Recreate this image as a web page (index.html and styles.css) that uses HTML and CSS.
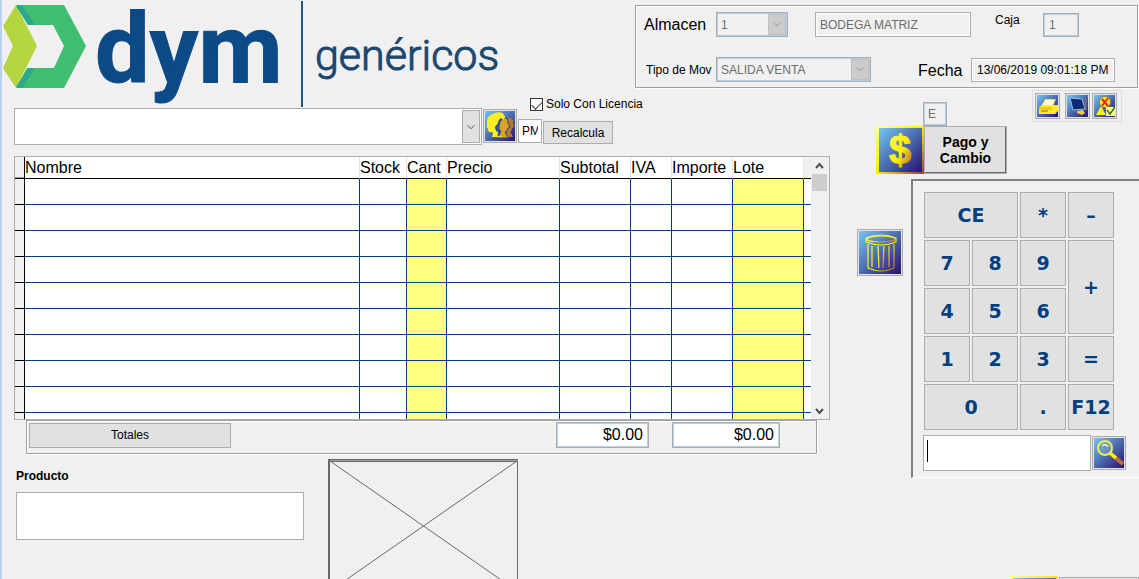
FILE: index.html
```html
<!DOCTYPE html>
<html lang="es">
<head>
<meta charset="utf-8">
<title>Punto de venta</title>
<link rel="stylesheet" href="styles.css">
</head>
<body>
<svg class="defs" width="0" height="0" aria-hidden="true">
  <defs>
    <linearGradient id="blue" x1="0" y1="0" x2="1" y2="1"><stop offset="0" stop-color="#74c6f2"/><stop offset=".5" stop-color="#4c6cb0"/><stop offset="1" stop-color="#281070"/></linearGradient>
    <linearGradient id="gold" x1="0" y1="0" x2="1" y2="1"><stop offset="0" stop-color="#fff870"/><stop offset=".55" stop-color="#ffee00"/><stop offset="1" stop-color="#a85838"/></linearGradient>
    <linearGradient id="frame" x1="0" y1="0" x2="1" y2="1"><stop offset="0" stop-color="#ffffa8"/><stop offset=".5" stop-color="#ffea00"/><stop offset="1" stop-color="#904040"/></linearGradient>
  </defs>
</svg>
<header class="header">
  <svg class="logo" width="508" height="107" viewBox="0 0 508 107" role="img" aria-label="dym genéricos">
    <path d="M14 5H62L84 46L62 88H14L25 68H52L62 46L51 25H26Z" fill="#3fbe72"/>
    <path d="M14 5L1 26L11 46L1 68L14 88L35 46Z" fill="#b4d440"/>
    <path d="M14 6L26 25L33 25L20 5ZM14 87L26 68H33L20 88Z" fill="#2ca88c"/>
    <text class="logo-name" x="93" y="82">dym</text>
    <path d="M300 1V107" stroke="#24557f" stroke-width="2"/>
    <text class="logo-sub" x="313" y="70">genéricos</text>
  </svg>
  <section class="info">
    <div class="info-row">
      <label class="info-label big" for="almacen">Almacen</label>
      <div class="combo off short">
        <select id="almacen" disabled><option>1</option></select>
        <svg class="arrow" viewBox="0 0 18 23"><path d="M5 9l4 4l4-4" /></svg>
      </div>
      <input class="field bodega" aria-label="Bodega" value="BODEGA MATRIZ" disabled>
      <label class="caja-label" for="caja">Caja</label>
      <input class="field blue caja" id="caja" value="1" disabled>
    </div>
    <div class="info-row second">
      <label class="info-label" for="tipo">Tipo de Mov</label>
      <div class="combo off long">
        <select id="tipo" disabled><option>SALIDA VENTA</option></select>
        <svg class="arrow" viewBox="0 0 18 23"><path d="M5 9l4 4l4-4" /></svg>
      </div>
      <label class="fecha-label big" for="fecha">Fecha</label>
      <input class="field fecha" id="fecha" value="13/06/2019 09:01:18 PM" readonly>
    </div>
  </section>
</header>
<main class="main">
  <section class="sale">
    <div class="search">
      <div class="combo client">
        <select aria-label="Cliente"><option></option></select>
        <svg class="arrow" viewBox="0 0 18 33"><path d="M5 15l4 4l4-4" /></svg>
      </div>
      <button class="icon-btn people" aria-label="Clientes">
        <svg viewBox="0 0 30 30"><rect width="30" height="30" fill="url(#blue)"/>
          <path d="M21 13q0-6 4-6q4 1 3 5l1 4l-2 1q0 3-2 4q2 2 3 5h-9q0-3 3-5q-1-4 2-8z" fill="#b8782c"/>
          <path d="M14 15q-1-7 4-8q5-1 5 5l2 4l-2 1q0 4-3 4q1 3 4 6H11q0-3 3-5z" fill="#d8a428" stroke="#2c4484"/>
          <path d="M7 26q1-3 1-5q-5 1-5-3q-2-2-1-5q-1-9 8-11q7-2 9 2q2 2 0 4q-5 0-6 4q-1 3-3 5q1 4 3 4q0 4 5 5z" fill="#ffee20"/>
          <path d="M17 8q-3 1-3 5l-3 3q1 4 4 4q0 3-2 5" fill="none" stroke="#2c4c98" stroke-width="2"/></svg>
      </button>
      <div class="recalc">
        <label class="check"><input type="checkbox" checked>Solo Con Licencia</label>
        <div class="recalc-row">
          <input class="field pm" aria-label="Lista de precio" value="PM">
          <button class="btn recalc-btn">Recalcula</button>
        </div>
      </div>
    </div>
    <div class="grid">
      <table class="items">
        <colgroup><col class="c-mark"><col><col class="c-stock"><col class="c-cant"><col class="c-precio"><col class="c-sub"><col class="c-iva"><col class="c-imp"><col class="c-lote"><col class="c-end"></colgroup>
        <thead><tr><td class="mark"></td><th>Nombre</th><th>Stock</th><th>Cant</th><th>Precio</th><th>Subtotal</th><th>IVA</th><th>Importe</th><th>Lote</th><td class="end"></td></tr></thead>
        <tbody>
          <tr><td class="mark"></td><td></td><td></td><td class="hl"></td><td></td><td></td><td></td><td></td><td class="hl"></td><td class="end"></td></tr>
          <tr><td class="mark"></td><td></td><td></td><td class="hl"></td><td></td><td></td><td></td><td></td><td class="hl"></td><td class="end"></td></tr>
          <tr><td class="mark"></td><td></td><td></td><td class="hl"></td><td></td><td></td><td></td><td></td><td class="hl"></td><td class="end"></td></tr>
          <tr><td class="mark"></td><td></td><td></td><td class="hl"></td><td></td><td></td><td></td><td></td><td class="hl"></td><td class="end"></td></tr>
          <tr><td class="mark"></td><td></td><td></td><td class="hl"></td><td></td><td></td><td></td><td></td><td class="hl"></td><td class="end"></td></tr>
          <tr><td class="mark"></td><td></td><td></td><td class="hl"></td><td></td><td></td><td></td><td></td><td class="hl"></td><td class="end"></td></tr>
          <tr><td class="mark"></td><td></td><td></td><td class="hl"></td><td></td><td></td><td></td><td></td><td class="hl"></td><td class="end"></td></tr>
          <tr><td class="mark"></td><td></td><td></td><td class="hl"></td><td></td><td></td><td></td><td></td><td class="hl"></td><td class="end"></td></tr>
          <tr><td class="mark"></td><td></td><td></td><td class="hl"></td><td></td><td></td><td></td><td></td><td class="hl"></td><td class="end"></td></tr>
          <tr><td class="mark"></td><td></td><td></td><td class="hl"></td><td></td><td></td><td></td><td></td><td class="hl"></td><td class="end"></td></tr>
        </tbody>
      </table>
      <div class="scroll">
        <svg viewBox="0 0 17 17"><path d="M5 11l3.500-4l3.500 4" /></svg>
        <div class="thumb"></div>
        <svg viewBox="0 0 17 17"><path d="M5 7l3.500 4l3.500-4" /></svg>
      </div>
    </div>
    <div class="totals">
      <button class="btn totals-btn">Totales</button>
      <input class="field blue money sub" aria-label="Subtotal" value="$0.00">
      <input class="field blue money imp" aria-label="Importe" value="$0.00">
    </div>
    <div class="product">
      <div class="product-text">
        <label for="producto">Producto</label>
        <textarea id="producto"></textarea>
      </div>
      <svg class="photo" width="191" height="134" viewBox="0 0 191 134">
        <path d="M0 .5H190M0 2.500H190" stroke="#696969"/><path d="M0 1.500H190" stroke="#a0a0a0"/>
        <path d="M1 0V134" stroke="#696969" stroke-width="2"/><path d="M189.500 2V134" stroke="#696969"/>
        <path d="M2 2L189 132M189 2L2 132" stroke="#696969"/>
      </svg>
    </div>
  </section>
  <aside class="side">
    <div class="side-top">
      <input class="field blue estado" aria-label="Estado" value="E" disabled>
      <div class="tools">
        <button class="icon-btn tool" aria-label="Imprimir"><svg viewBox="0 0 21 22"><rect width="21" height="22" fill="url(#blue)"/><path d="M8 4h11l-3 7H4z" fill="#fffbd0" stroke="#8c8430" stroke-width=".6"/><path d="M2 12l3-2h16v6l-3 3H2z" fill="#ffec28"/><path d="M2 12h13v3H2z" fill="#f0c820"/><path d="M4 16h7" stroke="#806818"/></svg></button>
        <button class="icon-btn tool gap" aria-label="Pantalla"><svg viewBox="0 0 21 22"><rect width="21" height="22" fill="url(#blue)"/><path d="M3 3l12 1l3 10l-12 1z" fill="#102878" stroke="#90c4ec"/><path d="M16 3l3 1l1 11l-2 0z" fill="#6c6c80"/><path d="M10 16l6-1l2 3l-3 2l-5-2z" fill="#e8cc38"/></svg></button>
        <button class="icon-btn tool" aria-label="Validar"><svg viewBox="0 0 21 22"><rect width="21" height="22" fill="url(#blue)"/><circle cx="11" cy="7" r="5.500" fill="#ffe838" stroke="#705020" stroke-width=".5"/><path d="M8 4l6 7M14 3L8 11" stroke="#e02810" stroke-width="2"/><path d="M2 20l5-9l5 9z" fill="#ffee20"/><path d="M12 12h9v9h-9z" fill="#fff780"/><path d="M13 15l3 4l5-7" fill="none" stroke="#207820" stroke-width="1.500"/></svg></button>
      </div>
    </div>
    <div class="pay">
      <button class="pay-icon" aria-label="Cobrar"><svg viewBox="0 0 48 48"><rect width="48" height="48" fill="url(#frame)"/><rect x="3" y="2" width="43" height="44" fill="url(#blue)"/><text class="dollar" x="24" y="38" text-anchor="middle">$</text></svg></button>
      <button class="pay-btn">Pago y<br>Cambio</button>
    </div>
    <div class="side-main">
      <button class="icon-btn trash" aria-label="Eliminar"><svg viewBox="0 0 42 43"><rect width="42" height="43" fill="url(#blue)"/><g fill="none" stroke="url(#gold)" stroke-width="1.200"><ellipse cx="22" cy="8" rx="14" ry="3"/><path d="M7 7v4q15 6 30 0V7Q22 1 7 7M9 13v24q13 6 26 0V13M13 15v21M30 15v21"/><path d="M19 15l1 22M25 15l-1 22"/></g></svg></button>
      <div class="keypad">
        <div class="keys">
          <button class="key wide">CE</button><button class="key">*</button><button class="key">–</button>
          <button class="key">7</button><button class="key">8</button><button class="key">9</button><button class="key tall">+</button>
          <button class="key">4</button><button class="key">5</button><button class="key">6</button>
          <button class="key">1</button><button class="key">2</button><button class="key">3</button><button class="key">=</button>
          <button class="key wide">0</button><button class="key">.</button><button class="key">F12</button>
        </div>
        <div class="lookup">
          <div class="code"><span class="caret"></span><input aria-label="Código" type="text"></div>
          <button class="icon-btn people" aria-label="Buscar"><svg viewBox="0 0 30 30"><rect width="30" height="30" fill="url(#blue)"/><path d="M17 16L29 26" stroke="#c06c38" stroke-width="4"/><path d="M16 15l6 5" stroke="#ffee10" stroke-width="3.500"/><circle cx="11" cy="10" r="7" fill="#86b4dc" fill-opacity=".4" stroke="#f4ec48" stroke-width="2"/><path d="M8 8q4-3 6 1" fill="none" stroke="#ffff90" stroke-width="1.500"/></svg></button>
        </div>
      </div>
    </div>
    <div class="more">
      <button class="pay-icon" aria-label="Más"><svg viewBox="0 0 48 48"><rect width="48" height="48" fill="url(#frame)"/><rect x="3" y="2" width="43" height="43" fill="url(#blue)"/></svg></button>
      <button class="more-btn" aria-label="Opciones"></button>
    </div>
  </aside>
</main>
</body>
</html>
```
FILE: styles.css
```css
* { box-sizing: border-box; }
body {
  margin: 0;
  height: 100vh;
  overflow: hidden;
  border-left: 2px solid #b9d1ec;
  background: #f0f0f0;
  color: #000;
  font: 12px "Liberation Sans", Arial, sans-serif;
}
button, input, select, textarea {
  margin: 0;
  padding: 0;
  font: inherit;
  color: inherit;
  border-radius: 0;
}
svg { display: block; flex: none; }
.defs { position: absolute; }
.big { font-size: 16px; }

/* header */
.header { display: flex; align-items: flex-start; justify-content: space-between; padding-right: 1px; }
.logo { margin-bottom: -18px; overflow: visible; }
.logo-name { font: bold 97px Roboto, sans-serif; fill: #0b4a86; stroke: #0b4a86; stroke-width: 1px; }
.logo-sub { font: 300 43px Roboto, sans-serif; fill: #1c4870; stroke: #1c4870; stroke-width: 1px; }
.info {
  width: 503px;
  margin-top: 5px;
  padding: 6px 8px 5px;
  border: 1px solid #a0a0a0;
  box-shadow: inset 1px 1px #fff, 1px 1px #fff;
}
.info-row { display: flex; align-items: center; }
.info-row.second { margin-top: 20px; }
.info-label { width: 72px; }
.second .info-label { padding-left: 2px; }
.field {
  min-width: 0;
  height: 24px;
  padding: 0 4px;
  border: 1px solid #abadb3;
  background: #f0f0f0;
  outline: 1px solid #fff;
  outline-offset: -2px;
}
.field.blue { outline-color: #b5cfe7; }
.field:disabled { color: #6d6d6d; }
.bodega { width: 156px; height: 25px; margin-left: 27px; }
.caja-label { width: 48px; margin-left: 24px; padding-bottom: 10px; }
.caja { width: 36px; padding: 0 5px; }
.fecha-label { width: 53px; margin-left: 47px; padding-top: 2px; }
.fecha { width: 144px; padding: 0 5px; }

.combo { display: grid; grid-template-columns: 1fr auto; border: 1px solid #abadb3; background: #fff; }
.combo select {
  grid-area: 1 / 1 / 2 / 3;
  width: 100%;
  padding: 0 4px;
  appearance: none;
  border: 0;
  background: transparent;
}
.combo select:disabled { color: #6d6d6d; opacity: 1; }
.arrow {
  grid-area: 1 / 2;
  width: 18px;
  height: 100%;
  background: #e1e1e1;
  border: 1px solid #adadad;
  fill: none;
  stroke: #444;
  pointer-events: none;
}
.combo.off { height: 25px; background: #f0f0f0; box-shadow: inset 0 0 0 1px #b5cfe7; }
.off .arrow { height: 21px; margin: 1px; background: #ccc; border-color: #bfbfbf; stroke: #888; }
.short { width: 72px; }
.long { width: 155px; }

/* buttons */
.btn { border: 1px solid #adadad; background: #e1e1e1; }
.icon-btn { border: 1px solid #adadad; padding: 1px; background: #e1e1e1; }
.icon-btn svg { width: 100%; height: 100%; }
.people { width: 34px; height: 34px; }

.main { display: flex; align-items: flex-start; }
.sale { flex: 1; min-width: 0; padding-left: 12px; }
.search { display: flex; align-items: flex-end; margin-top: 7px; gap: 1px; }
.client { width: 468px; height: 37px; padding: 1px; }
.search .people { margin-bottom: 2px; }
.recalc { margin-bottom: 1px; }
.check { display: flex; align-items: center; gap: 3px; margin: 0 0 7px 12px; height: 16px; white-space: nowrap; }
.check input {
  width: 13px;
  height: 13px;
  appearance: none;
  border: 1px solid #333;
  background: #fff;
  display: grid;
  justify-items: center;
  padding-top: 2px;
}
.check input:checked::before {
  content: "";
  width: 9px;
  height: 5px;
  border: solid #333;
  border-width: 0 0 1px 1px;
  transform: rotate(-45deg);
}
.recalc-row { display: flex; align-items: flex-end; gap: 1px; }
.pm { width: 24px; padding: 0 3px; margin-bottom: 1px; background: #fff; }
.recalc-btn { width: 70px; height: 23px; }

/* items */
.grid {
  display: flex;
  height: 264px;
  margin-top: 11px;
  overflow: hidden;
  border: 1px solid #abadb3;
  background: #fff;
}
.items {
  flex: 1;
  width: 100%;
  height: 282px;
  table-layout: fixed;
  border-collapse: separate;
  border-spacing: 0;
}
.c-mark { width: 10px; }
.c-stock { width: 47px; }
.c-cant { width: 40px; }
.c-precio { width: 113px; }
.c-sub { width: 71px; }
.c-iva { width: 41px; }
.c-imp { width: 61px; }
.c-lote { width: 71px; }
.c-end { width: 7px; }
.items th, .items td { padding: 0; }
.items th {
  height: 22px;
  font-size: 16px;
  font-weight: normal;
  line-height: 20px;
  text-align: left;
  border-right: 1px solid #e3e3e3;
  border-bottom: 1px solid #000;
  white-space: nowrap;
}
.items thead td { border-bottom: 1px solid #000; background: #f0f0f0; }
.items tbody td { height: 26px; border-right: 1px solid #004080; border-bottom: 1px solid #004080; }
.items .hl { background: #ffff80; }
.items tbody .end { border-right: 0; }
.items .mark, .items tbody .mark { border-right: 1px solid #000; border-bottom-color: #000; background: #f0f0f0; }
.items thead .mark { box-shadow: inset 0 -1px #a0a0a0; }
.scroll { display: flex; flex-direction: column; width: 18px; background: #f0f0f0; }
.scroll svg { width: 17px; height: 17px; fill: none; stroke: #505050; stroke-width: 2; }
.thumb { width: 15px; height: 17px; margin: 0 1px auto; background: #cdcdcd; }

.totals {
  display: flex;
  align-items: center;
  height: 34px;
  margin: 0 13px 0 12px;
  padding: 0 36px 4px 2px;
  border: 1px solid #a0a0a0;
  box-shadow: inset 1px 1px #fff, 1px 1px #fff;
}
.totals-btn { width: 202px; height: 25px; }
.money { height: 26px; padding: 0 5px; font-size: 16px; text-align: right; background: #fff; }
.money.sub { width: 93px; margin-left: auto; }
.money.imp { width: 108px; margin-left: 23px; }

.product { display: flex; margin-top: 5px; padding-left: 2px; }
.product-text { width: 288px; padding-top: 10px; }
.product label { display: block; margin-bottom: 9px; font-weight: bold; }
.product textarea { display: block; width: 288px; height: 48px; resize: none; border: 1px solid #abadb3; background: #fff; }
.photo { margin-left: 24px; }

/* side */
.side { width: 309px; flex: none; }
.side-top { display: flex; justify-content: space-between; align-items: flex-start; height: 37px; padding: 1px 17px 0 93px; }
.estado { width: 24px; margin-top: 12px; }
.tools { display: flex; padding: 2px 4px 2px 2px; border: 1px solid #ddd; }
.tool { width: 25px; height: 26px; }
.tool.gap { margin: 0 2px 0 5px; }
.pay { display: flex; padding-left: 46px; }
.pay-icon { width: 48px; height: 48px; border: 0; }
.pay-icon svg { width: 48px; height: 48px; }
.dollar { font: bold 40px "Liberation Sans", Arial, sans-serif; fill: url(#gold); stroke: url(#gold); stroke-width: 1px; }
.pay-btn {
  width: 83px;
  border: 1px solid #adadad;
  box-shadow: inset -1px -1px #696969;
  background: #e1e1e1;
  font-size: 14px;
  font-weight: bold;
  line-height: 16px;
}
.side-main { display: flex; align-items: flex-start; margin-top: 5px; }
.trash { width: 46px; height: 47px; margin: 50px 8px 0 27px; }
.keypad {
  flex: 1;
  padding: 11px 12px 6px 10px;
  border: solid #808080;
  border-width: 2px 0 0 2px;
  border-bottom: 1px solid #fff;
}
.keys { display: grid; grid-template-columns: repeat(4, 46px); grid-auto-rows: 46px; gap: 2px; padding-left: 1px; }
.key {
  border: 1px solid #adadad;
  background: #e1e1e1;
  color: #004080;
  font: bold 19px "DejaVu Sans", Verdana, sans-serif;
}
.wide { grid-column: span 2; }
.tall { grid-row: span 2; }
.lookup { display: flex; align-items: center; gap: 1px; margin-top: 5px; }
.code { display: flex; width: 168px; height: 36px; padding: 4px 3px; border: 1px solid #abadb3; background: #fff; }
.caret { width: 1px; height: 22px; background: #000; }
.code input { flex: 1; min-width: 0; border: 0; background: transparent; outline: 0; }
.more { display: flex; margin-top: 98px; padding-left: 180px; }
.more-btn { flex: 1; margin: 1px 0 0 1px; border: 1px solid #adadad; background: #e1e1e1; }
```
